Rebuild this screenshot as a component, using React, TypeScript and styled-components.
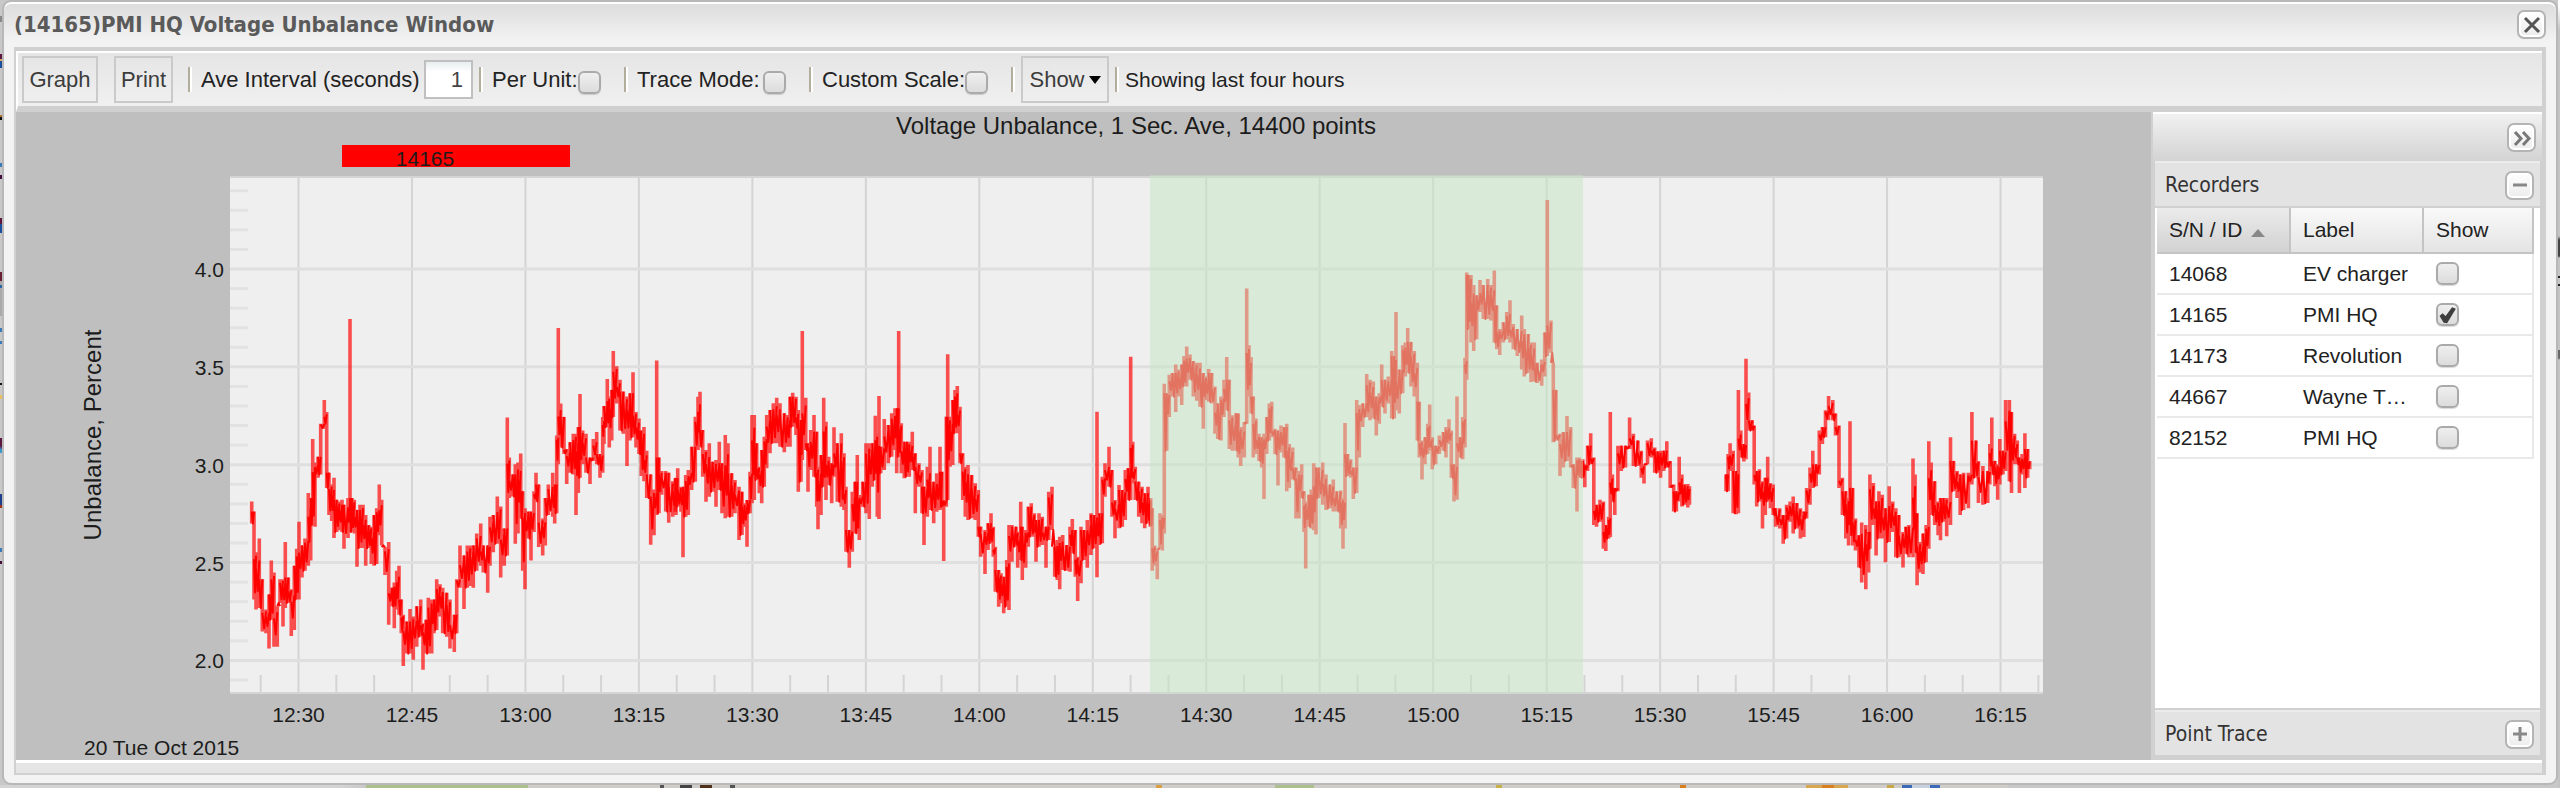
import React, { useState } from 'react';
import styled, { createGlobalStyle, css } from 'styled-components';

const GlobalStyle = createGlobalStyle`
  *, *::before, *::after { box-sizing: border-box; }
  body {
    margin: 0;
    background: #c8c8c8;
    font-family: 'Liberation Sans', Arial, sans-serif;
    font-size: 21px;
    color: #222;
  }
`;

const titleFont = css`
  font-family: 'DejaVu Sans Condensed', 'DejaVu Sans', 'Noto Sans', sans-serif;
`;

/* ---------- desktop and window frame ---------- */

const Desktop = styled.div`
  padding: 0 2px 3px;
  background:
    linear-gradient(180deg, transparent 16px, #888 16px 22px, transparent 22px 54px, #5b1740 54px 59px, #d8a860 59px 61px, #1c4f9c 61px 68px,
      transparent 68px 115px, #b07030 115px 117px, #111 117px 120px, transparent 120px 163px, #3a7ab8 163px 167px, transparent 167px 175px,
      #40103a 175px 179px, transparent 179px 218px, #5b1740 218px 224px, #1c4f9c 224px 233px, transparent 233px 272px, #6a2030 272px 281px,
      #aaa 281px 285px, #2a66a8 285px 288px, #aaa 288px 316px, transparent 316px 328px, #3a7ab8 328px 332px, transparent 332px 341px,
      #3a7ab8 341px 344px, transparent 344px 383px, #111 383px 385px, transparent 385px 395px, #e8c060 395px 399px, transparent 399px 438px,
      #5b1740 438px 446px, #3a9ad0 450px 453px, transparent 453px 494px, #1c3f8c 494px 505px, #a03020 505px 508px, transparent 508px 548px,
      #3a7ab8 548px 552px, transparent 552px 561px, #40103a 561px 564px, transparent 564px) left top / 2px 100% no-repeat,
    linear-gradient(180deg, #fff 6px, #c4c4c4 30px, #c4c4c4 236px, #444 240px 256px, #c4c4c4 258px 276px, #222 276px 278px, #c4c4c4 278px 284px,
      #222 284px 286px, #c4c4c4 286px 350px, #666 350px 358px, #c4c4c4 360px) right top / 2px 100% no-repeat,
    linear-gradient(90deg, #d4d4d4 340px, #c8c8c8 366px, #abc08c 366px 528px, #d0cdc8 528px 660px, #555 660px 664px, #d0cdc8 664px 680px,
      #444 680px 692px, #d0cdc8 692px 700px, #503018 700px 712px, #d0cdc8 712px 730px, #555 730px 735px, #d0cdc8 735px 1156px,
      #d8a040 1156px 1162px, #d0cdc8 1162px 1275px, #abc08c 1275px 1314px, #d0cdc8 1314px 1496px, #c8b048 1496px 1502px, #d0cdc8 1502px 1680px,
      #d88020 1680px 1686px, #d0cdc8 1686px 1806px, #d8a850 1806px 1822px, #d88020 1822px 1834px, #d8a850 1834px 1848px, #d0cdc8 1848px 1887px,
      #c8a848 1887px 1894px, #d0cdc8 1894px 1902px, #3a6ab8 1902px 1912px, #c8d0e0 1912px 1930px, #3a6ab8 1930px 1940px, #d0cdc8 1940px 2008px, #c8c8c8 2008px)
      left bottom / 100% 3px no-repeat;
`;

const Window = styled.section`
  border: 2px solid #b8b8b8;
  border-radius: 9px;
  padding: 0 10px 8px;
  background: linear-gradient(180deg, #dedede 4px, #f3f3f3 40px);
  box-shadow: inset 0 2px 0 #fff;
`;

const TitleBar = styled.header`
  display: flex;
  align-items: center;
  justify-content: space-between;
  height: 45px;
`;

const Title = styled.h1`
  ${titleFont}
  margin: 0;
  font-size: 22px;
  line-height: 28px;
  font-weight: bold;
  color: #5a5a5a;
`;

const ToolButton = styled.button`
  display: flex;
  align-items: center;
  justify-content: center;
  width: 29px;
  height: 29px;
  padding: 0;
  border: 2px solid #b4b4b4;
  border-radius: 7px;
  background: linear-gradient(180deg, #fff, #ececec);
  box-shadow: inset 0 0 0 2px #fff;
`;

const Body = styled.div`
  border: solid #d0d0d0;
  border-width: 4px 4px 2px 2px;
`;

/* ---------- toolbar ---------- */

const Toolbar = styled.div`
  display: flex;
  align-items: center;
  padding: 0 4px 0 4px;
  height: 61px;
  border-top: 2px solid #fff;
  border-left: 2px solid #fff;
  border-bottom: 6px solid #d0d0d0;
  background: linear-gradient(180deg, #e5e5e5, #f0f0f0);
  color: #222;
`;

const BarButton = styled.button<{ $w: number }>`
  flex: none;
  display: flex;
  align-items: center;
  justify-content: center;
  gap: 4px;
  width: ${(p) => p.$w}px;
  height: 47px;
  padding: 0;
  border: 2px solid #cacaca;
  background: transparent;
  font-family: inherit;
  font-size: 22px;
  color: #3c3c3c;
  & + & { margin-left: 16px; }
`;

const Caret = styled.span`
  border: 6px solid transparent;
  border-top: 8px solid #000;
  border-bottom: 0;
`;

const Separator = styled.i<{ $before?: number; $after?: number }>`
  flex: none;
  width: 4px;
  height: 25px;
  margin: 0 ${(p) => p.$after ?? 9}px 0 ${(p) => p.$before ?? 6}px;
  border-left: 2px solid #b3ad9c;
  border-right: 2px solid #fff;
`;

const Field = styled.label<{ $w: number }>`
  flex: none;
  display: flex;
  align-items: center;
  justify-content: space-between;
  width: ${(p) => p.$w}px;
  height: 40px;
  font-size: 22px;
  white-space: nowrap;
`;

const IntervalInput = styled.input`
  width: 49px;
  height: 39px;
  padding: 0 8px;
  border: 2px solid #c0c0c0;
  background: linear-gradient(180deg, #e8eef0, #fff 10px);
  font-family: inherit;
  font-size: 22px;
  color: #444;
  text-align: right;
`;

const Check = styled.input.attrs({ type: 'checkbox' })`
  appearance: none;
  display: block;
  flex: none;
  width: 23px;
  height: 23px;
  margin: 0;
  border: 2px solid #aaa;
  border-radius: 6px;
  background: linear-gradient(180deg, #efefef, #dcdcdc);
  box-shadow: 0 1px 1px rgba(0, 0, 0, 0.15);
  &:checked::before {
    content: '';
    display: block;
    width: 19px;
    height: 19px;
    background: #3f3f3f;
    clip-path: polygon(8% 58%, 24% 44%, 40% 58%, 74% 12%, 94% 20%, 48% 96%, 30% 94%);
  }
  ${Field} & { margin-top: 5px; }
`;

const Status = styled.span`
  font-size: 21px;
`;

/* ---------- content ---------- */

const Content = styled.div`
  display: flex;
  align-items: stretch;
`;

const ChartPane = styled.div`
  flex: 1;
  min-width: 0;
  background: #bfbfbf;
`;

const ChartSvg = styled.svg`
  display: block;
  width: 100%;
  height: auto;
  overflow: visible;
  text {
    font-family: 'Liberation Sans', Arial, sans-serif;
    font-size: 21px;
    fill: #1c1c1c;
  }
  .title, .axis { font-size: 24px; }
`;

const Side = styled.aside`
  flex: none;
  display: flex;
  flex-direction: column;
  width: 391px;
  border-left: 2px solid #d0d0d0;
  background: #d0d0d0;
`;

const SideTop = styled.div`
  display: flex;
  align-items: center;
  justify-content: flex-end;
  height: 49px;
  padding-right: 6px;
  border-top: 2px solid #fff;
  background: linear-gradient(180deg, #f1f1f1, #d3d3d3);
`;

const Panel = styled.section`
  display: flex;
  flex-direction: column;
  flex: 1;
  margin: 0 2px;
  background: #fff;
`;

const FootPanel = styled(Panel)`
  flex: none;
  margin-bottom: 5px;
  border-top: 2px solid #d0d0d0;
`;

const PanelHead = styled.header`
  display: flex;
  align-items: center;
  justify-content: space-between;
  height: 45px;
  padding: 1px 6px 0 10px;
  border-top: 2px solid #ececec;
  background: #e3e3e3;
`;

const PanelTitle = styled.h2`
  ${titleFont}
  margin: 0;
  font-size: 21px;
  line-height: 28px;
  font-weight: normal;
  color: #333;
`;

const GridFrame = styled.div`
  padding: 0 6px 0 2px;
  border-top: 2px solid #d0d0d0;
`;

const Grid = styled.table`
  width: 100%;
  border-collapse: separate;
  border-spacing: 0;
  table-layout: fixed;
  text-align: left;
`;

const HeadCell = styled.th<{ $w: number; $sorted?: boolean }>`
  width: ${(p) => p.$w}px;
  height: 46px;
  padding: 0 0 0 12px;
  border-right: 2px solid #c4c4c4;
  border-bottom: 2px solid #c4c4c4;
  font-weight: normal;
  background: ${(p) => (p.$sorted ? 'linear-gradient(180deg, #ebebeb, #d2d2d2)' : 'linear-gradient(180deg, #f9f9f9, #e4e4e4)')};
`;

const SortArrow = styled.span`
  display: inline-block;
  margin-left: 8px;
  border: 7px solid transparent;
  border-bottom: 8px solid #888;
  border-top: 0;
`;

const Cell = styled.td<{ $last?: boolean }>`
  height: 41px;
  padding: 0 12px;
  border-bottom: 2px solid #e9e9e9;
  border-right: ${(p) => (p.$last ? '2px solid #e9e9e9' : '0')};
  white-space: nowrap;
`;

const BottomBar = styled.div`
  height: 13px;
  border-top: 3px solid #fff;
  background: #e5e5e5;
`;

/* ---------- chart data: [x, high, low] samples per recorded stretch ---------- */

interface Stretch { x: number; y: number; sx: number; sy: number; pts: string; }

const STRETCHES: Stretch[] = [
  { x: 164, y: 48, sx: 3, sy: 2.958, pts:
    '215,1010,1075;222,1040,1300;228,1160,1330;238,1120,1325;247,1240,1395;258,1330,1400;267,1285,1445;274,1185,1360;282,1220,1440;292,1320,1440;300,1240,1310;309,1240,1380;316,1130,1325;325,1235,1310;334,1270,1408;343,1200,1390;350,1150,1300;357,1070,1300;366,1140,1235;375,1120,1215;385,985,1200;392,1000,1185;398,825,1080;405,895,1085;414,878,940;422,780,930;433,710,795;440,745,970;447,925,1050;455,960,1068;462,940,1118;470,1005,1100;478,1010,1095;486,1005,1100;492,1020,1150;504,1000,1118;510,470,1100;516,1000,1100;523,1005,1105;531,1035,1203;540,1020,1148;549,1020,1148;557,1050,1200;566,1080,1148;574,1085,1195;582,1050,1200;590,1030,1195;598,960,1110;605,1005,1140;615,1145,1228;626,1130,1375;636,1265,1320;643,1250,1385;650,1215,1330;657,1200,1345;664,1300,1400;670,1345,1497;680,1365,1460;690,1328,1460;700,1350,1478;710,1320,1440;722,1300,1410;729,1370,1508;738,1360,1460;745,1295,1460;755,1300,1460;762,1300,1400;770,1240,1390;780,1255,1350;788,1265,1400;800,1280,1410;810,1300,1445;823,1345,1455;830,1240,1400;840,1140,1265;852,1170,1328;862,1140,1265;871,1140,1260;880,1140,1265;890,1105,1215;902,1075,1200;910,1140,1220;923,1140,1280;930,1055,1200;940,1050,1160;952,995,1135;962,1025,1235;973,1090,1200;982,762,1170;988,880,1000;998,930,995;1006,900,1135;1014,895,1105;1022,868,1060;1028,980,1215;1035,1030,1270;1045,1040,1120;1053,1040,1185;1062,980,1100;1068,925,1010;1076,960,1145;1088,1060,1170;1096,1000,1140;1105,960,1050;1118,925,1055;1124,960,1075;1130,815,1045;1135,497,900;1142,720,850;1152,760,870;1160,855,958;1170,835,925;1180,810,930;1188,810,1050;1195,790,985;1200,692,940;1208,800,900;1218,810,925;1230,880,958;1240,825,890;1250,805,900;1260,870,940;1268,760,925;1272,728,840;1282,648,790;1288,700,850;1295,680,830;1300,565,760;1310,610,720;1320,650,800;1330,685,810;1341,700,905;1350,690,830;1359,628,820;1368,745,850;1377,765,870;1384,800,935;1392,790,950;1400,860,1000;1412,930,1138;1422,975,1110;1430,593,1050;1437,880,1045;1445,920,990;1457,920,1040;1466,925,1073;1478,950,1055;1488,940,1050' },
  { x: 624, y: 188, sx: 3, sy: 3, pts:
    '106,535,635;113,505,620;123,560,635;129,560,772;137,525,650;145,510,645;155,440,570;166,350,545;174,290,450;180,275,440;188,390,530;198,450,605;208,430,590;218,485,575;228,480,620;238,425,570;246,490,640;256,405,655;264,430,650;275,520,650;285,540,640;297,560,720;306,575,705;314,610,680;321,600,740;330,515,640;336,345,610;343,345,600;350,430,540;358,500,580;365,450,610;373,410,560;380,345,505;390,330,460;400,310,430;410,293,430;420,310,440;433,340,457;443,345,440;450,290,440;458,278,380;468,290,405;475,330,575;483,360,545;487,93,480;497,293,450;504,430,575;512,390,510;522,345,530;530,395,620;534,500,688;543,465,645;551,293,560;558,365,600;566,470,555;575,490,610;582,382,530;592,430,605;604,400,620;612,460,630;618,560,755;628,690,803;637,575,755;645,545,700;652,465,700;658,585,720;668,545,620;678,430,640;688,430,657;697,430,560;706,347,540;712,400,650;717,288,657;722,440,520;733,357,510;745,375,490;755,340,470;765,325,450;770,325,520;776,93,470;784,370,520;793,425,535;801,425,530;808,425,530;817,395,510;826,460,640;837,490,560;846,510,640;852,560,735;862,500,650;870,440,630;881,545,670;890,520,635;900,440,630;906,515,620;911,600,783;919,350,620;923,163,600;930,350,500;938,300,495;945,270,400;952,258,400;960,320,490;968,460,600;976,500,650;984,495,660;995,525,655;1006,550,660;1015,570,710;1022,680,770;1035,690,822;1044,670,750;1053,640,730;1060,680,770;1066,740,875;1076,810,920;1083,820,910;1091,830,940;1100,780,920;1107,675,930;1116,675,785;1128,680,740;1133,695,803;1142,605,780;1147,680,840;1157,690,803;1165,620,740;1174,610,710;1183,640,710;1188,660,785;1197,640,740;1207,650,735;1218,680,803;1226,575,720;1236,560,690;1244,740,830;1252,720,840;1259,710,868;1268,705,810;1280,735,812;1290,680,815;1297,657,760;1306,690,830;1313,770,903;1323,680,850;1332,690,780;1342,660,803;1353,640,765;1363,645,745;1371,335,832;1378,640,735;1387,530,730;1395,490,590;1407,440,560;1416,510,650;1425,600,715;1437,555,685;1447,570,680;1456,510,660;1464,505,600;1472,170,600;1478,425,550;1486,500,600;1496,545,650;1506,560,670;1514,580,685;1524,560,670;1531,600,680' },
  { x: 1084, y: 48, sx: 3, sy: 2.958, pts:
    '152,1000,1080;157,1030,1215;164,1140,1200;172,1150,1240;180,1045,1150;187,1050,1155;193,662,1105;200,690,860;208,635,760;217,630,700;227,605,745;236,620,700;245,605,725;252,580,670;260,552,670;270,575,650;280,595,700;290,600,712;300,600,730;310,630,795;318,640,710;326,618,715;335,630,720;345,670,810;353,720,825;363,700,830;372,650,760;380,583,740;388,650,855;397,755,860;408,748,860;415,750,880;422,790,905;433,775,880;440,380,780;447,548,700;453,583,750;460,700,880;468,765,870;477,810,890;485,820,910;492,810,1003;500,760,870;508,720,830;515,715,820;525,795,870;534,800,963;543,785,865;552,790,880;560,780,980;568,840,970;578,850,945;588,910,1060;597,920,1060;605,900,1000;612,980,1100;617,1010,1208;626,990,1085;634,975,1090;641,897,1095;648,910,1108;656,910,1000;668,895,1020;678,930,1035;690,960,1030;700,945,1040;710,980,1040;722,978,1090;729,1000,1150;735,778,1090;743,870,935;752,885,940;760,910,1003;770,710,985;778,725,880;788,720,790;800,633,760;810,650,770;820,655,765;829,700,815;838,690,780;845,605,730;855,650,750;865,640,720;875,565,765;883,580,765;888,450,740;898,620,750;908,548,690;916,540,640;923,497,630;933,538,670;943,565,700;952,600,830;958,715,880;966,830,945;975,820,900;983,780,870;989,723,860;997,820,915;1007,845,900;1018,815,870;1030,805,860;1038,790,880;1047,767,840;1054,800,940;1062,900,1010;1071,700,1005;1080,820,880;1088,760,885;1095,585,850;1100,333,650;1106,340,500;1113,340,540;1121,370,565;1130,400,530;1140,355,450;1150,370,470;1163,352,470;1173,370,475;1183,327,540;1190,430,560;1199,500,577;1210,480,540;1220,450,530;1230,415,540;1240,485,560;1252,500,580;1265,460,620;1273,500,640;1285,515,630;1293,540,657;1303,540,655;1312,600,660;1325,590,668;1334,510,640;1342,118,580;1353,475,570;1360,600,835;1368,680,830;1380,810,935;1390,805,910;1401,757,890;1412,790,910;1420,900,970;1431,880,1040;1438,880,940;1448,895,940' },
  { x: 1564, y: 48, sx: 2.904, sy: 2.958, pts:
    '3,890,940;8,885,940;14,900,968;22,845,920;31,808,900;40,880,1080;48,1020,1085;58,1005,1070;68,1010,1150;75,1080,1157;83,1055,1120;88,745,1115;94,930,1010;101,970,1050;110,845,980;120,845,920;132,845,910;144,762,855;155,810,905;168,830,905;178,860,940;186,900,957;196,830,900;207,823,880;217,850,925;226,862,925;234,860,940;243,860,920;252,832,910;262,890,970;272,960,1040;280,980,1040;288,878,1010;296,930,1025;304,960,1020;313,958,1028;318,965,1020' },
  { x: 1564, y: 48, sx: 2.904, sy: 2.958, pts:
    '424,930,980;430,870,980;436,838,920;445,860,1045;454,920,1048;460,680,1045;467,800,880;476,840,892;482,588,885;490,688,800;500,770,800;506,785,960;513,920,1025;521,915,1010;530,950,1090;538,940,1050;545,878,1010;553,955,1030;561,960,1050;568,1030,1085;580,1030,1090;590,1050,1135;600,1020,1120;610,1010,1070;619,995,1105;630,1015,1090;640,1030,1120;650,1040,1115;658,970,1060;668,910,1020;676,860,970;686,900,965;695,800,930;704,790,840;713,740,820;722,698,770;734,710,770;742,750,815;752,785,970;762,940,1050;772,980,1120;780,1000,1140;784,773,1110;792,970,1140;800,1060,1155;810,1110,1205;818,1072,1250;830,1080,1270;838,1100,1220;842,930,1150;852,955,1080;860,1010,1170;868,980,1120;878,990,1120;887,1030,1190;898,965,1130;908,1010,1100;917,1030,1175;926,1050,1175;938,1100,1205;946,1085,1165;955,1080,1175;967,883,1175;973,930,1160;979,1045,1258;988,1130,1220;996,1105,1225;1005,1080,1190;1013,832,1150;1020,895,1050;1030,950,1080;1040,1010,1110;1047,1000,1125;1056,1000,1070;1065,1000,1113;1076,820,1080;1085,890,980;1095,920,1000;1104,930,1050;1114,925,1035;1128,925,1030;1138,745,960;1150,830,940;1157,890,1015;1170,905,1020;1184,920,1015;1190,840,960;1196,762,930;1205,890,965;1213,900,1005;1219,825,960;1228,860,930;1236,710,920;1247,710,950;1253,745,985;1262,810,900;1270,830,900;1276,880,985;1284,870,930;1292,808,970;1300,855,940;1306,890,915' },
];

const samplesOf = (s: Stretch) =>
  s.pts.split(';').map((p) => {
    const [x, hi, lo] = p.split(',').map(Number);
    return [s.x + x / s.sx, s.y + hi / s.sy, s.y + lo / s.sy];
  });

/* full high/low range of every sample */
const rangePath = (s: Stretch) =>
  samplesOf(s).map(([x, hi, lo]) => `M${x.toFixed(1)} ${hi.toFixed(1)}V${lo.toFixed(1)}`).join('');

/* the range that neighbouring samples share, where the line is densest */
const corePath = (s: Stretch) => {
  const pts = samplesOf(s);
  return pts.slice(1).map(([x, hi, lo], i) => {
    const [px, phi, plo] = pts[i];
    const a = Math.max(hi, phi);
    const b = Math.min(lo, plo);
    const inset = b > a ? (b - a) * 0.15 * (i % 3) : 0;
    const mid = ((x + px) / 2).toFixed(1);
    return `M${px.toFixed(1)} ${(a + inset).toFixed(1)}L${mid} ${(b - inset).toFixed(1)}L${x.toFixed(1)} ${(a + inset / 2).toFixed(1)}`;
  }).join('');
};

const PLOT = { left: 214, right: 2027, top: 65, bottom: 581 };
const TIMES = ['12:30', '12:45', '13:00', '13:15', '13:30', '13:45', '14:00', '14:15', '14:30', '14:45', '15:00', '15:15', '15:30', '15:45', '16:00', '16:15'];
const VALUES = ['4.0', '3.5', '3.0', '2.5', '2.0'];
const timeX = (i: number) => 282.5 + 113.47 * i;
const valueY = (v: number) => 157 + (4 - v) * 195.7;

function Chart() {
  const minorTimes = Array.from({ length: 48 }, (_, i) => i - 1).filter((i) => i % 3 !== 0);
  const minorValues = Array.from({ length: 26 }, (_, i) => 19 + i).filter((i) => i % 5 !== 0);
  return (
    <ChartSvg viewBox="0 0 2135 648" role="img" aria-label="Voltage unbalance in percent over time">
      <text className="title" x="1120" y="22" textAnchor="middle">Voltage Unbalance, 1 Sec. Ave, 14400 points</text>
      <rect x="326" y="33" width="228" height="22" fill="#f00" />
      <text x="409" y="54" textAnchor="middle">14165</text>
      <rect x={PLOT.left} y={PLOT.top} width={PLOT.right - PLOT.left} height={PLOT.bottom - PLOT.top} fill="#efefef" />
      <g stroke="#d4d4d4" strokeWidth="2">
        {TIMES.map((t, i) => <path key={t} d={`M${timeX(i)} ${PLOT.top}V${PLOT.bottom}`} />)}
        {VALUES.map((v) => <path key={v} d={`M${PLOT.left} ${valueY(+v)}H${PLOT.right}`} strokeWidth="3" stroke="#dfdfdf" />)}
        {minorTimes.map((i) => <path key={i} d={`M${timeX(i / 3)} ${PLOT.bottom - 18}V${PLOT.bottom}`} />)}
        {minorValues.map((v) => <path key={v} d={`M${PLOT.left} ${valueY(v / 10)}h18`} strokeWidth="3" stroke="#e2e2e2" />)}
        <path d={`M${PLOT.left} ${PLOT.top}H${PLOT.right}M${PLOT.left} ${PLOT.bottom}H${PLOT.right}`} />
      </g>
      <g fill="none" stroke="#f00">
        {STRETCHES.map((s, i) => (
          <g key={i}>
            <path d={rangePath(s)} strokeWidth="3.600" opacity="0.68" />
            <path d={corePath(s)} strokeWidth="2" strokeLinejoin="round" />
          </g>
        ))}
      </g>
      <rect x="1134" y="63" width="433" height="518" fill="#c5e5c1" opacity="0.5" />
      {VALUES.map((v) => <text key={v} x="208" y={valueY(+v) + 8} textAnchor="end">{v}</text>)}
      {TIMES.map((t, i) => <text key={t} x={timeX(i)} y="610" textAnchor="middle">{t}</text>)}
      <text x="68" y="643">20 Tue Oct 2015</text>
      <text className="axis" transform="translate(85 323) rotate(-90)" textAnchor="middle">Unbalance, Percent</text>
    </ChartSvg>
  );
}

/* ---------- glyphs of the small square buttons ---------- */

type GlyphName = 'close' | 'collapse' | 'minus' | 'plus';
const GLYPHS: Record<GlyphName, { d: string; color: string; width: number }> = {
  close: { d: 'M4 4L18 18M18 4L4 18', color: '#555', width: 3 },
  collapse: { d: 'M4 5L10 11.500L4 18M12 5L18 11.500L12 18', color: '#777', width: 3 },
  minus: { d: 'M4 11H18', color: '#888', width: 3 },
  plus: { d: 'M4 11H18M11 4V18', color: '#888', width: 3 },
};

function Glyph({ name }: { name: GlyphName }) {
  const g = GLYPHS[name];
  return (
    <svg width="22" height="22" viewBox="0 0 22 22" fill="none" aria-hidden="true">
      <path d={g.d} stroke={g.color} strokeWidth={g.width} />
    </svg>
  );
}

const RECORDERS = [
  { id: '14068', label: 'EV charger' },
  { id: '14165', label: 'PMI HQ' },
  { id: '14173', label: 'Revolution' },
  { id: '44667', label: 'Wayne T…' },
  { id: '82152', label: 'PMI HQ' },
];

export default function App() {
  const [shown, setShown] = useState<string[]>(['14165']);
  const toggle = (id: string) =>
    setShown((s) => (s.includes(id) ? s.filter((v) => v !== id) : [...s, id]));

  return (
    <>
      <GlobalStyle />
      <Desktop>
        <Window>
          <TitleBar>
            <Title>(14165)PMI HQ Voltage Unbalance Window</Title>
            <ToolButton aria-label="Close"><Glyph name="close" /></ToolButton>
          </TitleBar>
          <Body>
            <Toolbar>
              <BarButton $w={76}>Graph</BarButton>
              <BarButton $w={59}>Print</BarButton>
              <Separator $before={15} />
              <Field $w={272}>Ave Interval (seconds)<IntervalInput type="text" defaultValue="1" /></Field>
              <Separator />
              <Field $w={109}>Per Unit:<Check /></Field>
              <Separator $before={23} />
              <Field $w={149}>Trace Mode:<Check /></Field>
              <Separator $before={23} />
              <Field $w={166}>Custom Scale:<Check /></Field>
              <Separator $before={23} $after={6} />
              <BarButton $w={88} aria-haspopup="menu">Show<Caret /></BarButton>
              <Separator $after={6} />
              <Status>Showing last four hours</Status>
            </Toolbar>
            <Content>
              <ChartPane><Chart /></ChartPane>
              <Side>
                <SideTop>
                  <ToolButton aria-label="Collapse side panel"><Glyph name="collapse" /></ToolButton>
                </SideTop>
                <Panel>
                  <PanelHead>
                    <PanelTitle>Recorders</PanelTitle>
                    <ToolButton aria-label="Collapse recorders"><Glyph name="minus" /></ToolButton>
                  </PanelHead>
                  <GridFrame>
                    <Grid>
                      <thead>
                        <tr>
                          <HeadCell $w={134} $sorted aria-sort="ascending">S/N / ID<SortArrow /></HeadCell>
                          <HeadCell $w={133}>Label</HeadCell>
                          <HeadCell $w={110}>Show</HeadCell>
                        </tr>
                      </thead>
                      <tbody>
                        {RECORDERS.map((r) => (
                          <tr key={r.id}>
                            <Cell>{r.id}</Cell>
                            <Cell>{r.label}</Cell>
                            <Cell $last>
                              <Check aria-label={`Show ${r.id}`} checked={shown.includes(r.id)} onChange={() => toggle(r.id)} />
                            </Cell>
                          </tr>
                        ))}
                      </tbody>
                    </Grid>
                  </GridFrame>
                </Panel>
                <FootPanel>
                  <PanelHead>
                    <PanelTitle>Point Trace</PanelTitle>
                    <ToolButton aria-label="Expand point trace"><Glyph name="plus" /></ToolButton>
                  </PanelHead>
                </FootPanel>
              </Side>
            </Content>
            <BottomBar />
          </Body>
        </Window>
      </Desktop>
    </>
  );
}
